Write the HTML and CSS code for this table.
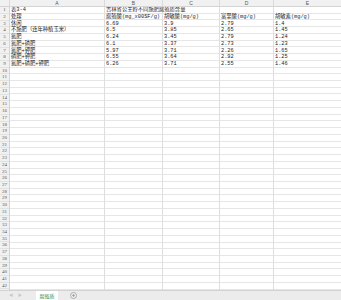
FILE: index.html
```html
<!DOCTYPE html>
<html lang="zh">
<head>
<meta charset="utf-8">
<link rel="stylesheet" href="styles.css">
</head>
<body>
<div class="sheet">
  <div class="colhead">
    <div class="corner"></div>
    <div class="ch">A</div>
    <div class="ch">B</div>
    <div class="ch">C</div>
    <div class="ch">D</div>
    <div class="ch last">E</div>
  </div>
  <div class="body">
    <div class="rownums">
      <div>1</div><div>2</div><div>3</div><div>4</div><div>5</div><div>6</div><div>7</div>
      <div>8</div><div>9</div><div>10</div><div>11</div><div>12</div><div>13</div><div>14</div>
      <div>15</div><div>16</div><div>17</div><div>18</div><div>19</div><div>20</div><div>21</div>
      <div>22</div><div>23</div><div>24</div><div>25</div><div>26</div><div>27</div><div>28</div>
      <div>29</div><div>30</div><div>31</div><div>32</div><div>33</div><div>34</div><div>35</div>
      <div>36</div><div>37</div><div>38</div><div>39</div><div>40</div><div>41</div><div>42</div>
    </div>
    <div class="cells">
      <div>表3-4</div><div class="wide">吉林省公主岭不同施肥腐殖质含量</div><div></div><div></div><div></div>
      <div>处理</div><div>腐殖酸(mg_x00SF/g)</div><div>胡敏酸(mg/g)</div><div>富里酸(mg/g)</div><div>胡敏素(mg/g)</div>
      <div>休闲</div><div>6.69</div><div>3.9</div><div>2.79</div><div>1.4</div>
      <div>不施肥（连年种植玉米）</div><div>6.5</div><div>3.85</div><div>2.65</div><div>1.45</div>
      <div>氮肥</div><div>6.24</div><div>3.45</div><div>2.79</div><div>1.24</div>
      <div>氮肥+磷肥</div><div>6.1</div><div>3.37</div><div>2.73</div><div>1.23</div>
      <div>氮肥+钾肥</div><div>5.97</div><div>3.71</div><div>2.26</div><div>1.65</div>
      <div>磷肥+钾肥</div><div>6.55</div><div>3.64</div><div>2.92</div><div>1.25</div>
      <div>氮肥+磷肥+钾肥</div><div>6.26</div><div>3.71</div><div>2.55</div><div>1.46</div>
    </div>
  </div>
  <div class="tabbar">
    <div class="nav"><span>◀</span><span>▶</span></div>
    <div class="tab">腐殖质</div>
    <div class="add">
      <svg width="7" height="7" viewBox="0 0 7 7"><circle cx="3.5" cy="3.5" r="3" fill="none" stroke="#9a9a9a" stroke-width="0.7"/><path d="M3.5 2v3M2 3.5h3" stroke="#9a9a9a" stroke-width="0.7"/></svg>
    </div>
  </div>
</div>
</body>
</html>
```
FILE: styles.css
```css
html, body {
  margin: 0;
  padding: 0;
  background: #fff;
  overflow: hidden;
}
.sheet {
  width: 341px;
  height: 300px;
  display: flex;
  flex-direction: column;
  font-family: "Liberation Mono", "Noto Sans CJK SC", monospace;
  color: #222;
}
.colhead {
  display: grid;
  grid-template-columns: 10px 95px 58px 57px 54px 1fr;
  height: 7.3px;
  background: #f1f1f1;
  border-bottom: 1px solid #d4d4d4;
  box-sizing: border-box;
  flex: none;
}
.ch, .corner {
  border-right: 1px solid #dadada;
  font-size: 5px;
  line-height: 6.3px;
  text-align: center;
  color: #555;
  font-family: "Liberation Sans", sans-serif;
}
.ch.last { border-right: none; }
.body {
  display: flex;
  flex: none;
  height: 282.66px;
  overflow: hidden;
}
.rownums {
  width: 10px;
  flex: none;
  background: #f1f1f1;
  border-right: 1px solid #d4d4d4;
  box-sizing: border-box;
}
.rownums div {
  height: 6.73px;
  line-height: 6.73px;
  font-size: 5px;
  text-align: center;
  color: #555;
  font-family: "Liberation Serif", serif;
  box-shadow: inset 0 -1px 0 #e2e2e2;
}
.cells {
  flex: 1;
  display: grid;
  grid-template-columns: 95px 58px 57px 54px 1fr;
  grid-auto-rows: 6.73px;
  align-content: start;
  font-size: 5.3px;
  line-height: 6.73px;
  background-image:
    linear-gradient(to right,
      transparent 94px, #dedede 94px, #dedede 95px,
      transparent 95px, transparent 152px, #dedede 152px, #dedede 153px,
      transparent 153px, transparent 209px, #dedede 209px, #dedede 210px,
      transparent 210px, transparent 263px, #dedede 263px, #dedede 264px,
      transparent 264px),
    repeating-linear-gradient(to bottom,
      transparent 0, transparent 5.73px, #e6e6e6 5.73px, #e6e6e6 6.73px);
}
.cells div {
  padding-left: 1px;
  white-space: nowrap;
  overflow: visible;
}
.tabbar {
  flex: 1;
  display: flex;
  align-items: stretch;
  background: #ececec;
  border-top: 1px solid #d2d2d2;
  box-sizing: border-box;
}
.nav {
  width: 36px;
  display: flex;
  gap: 5px;
  padding-left: 9px;
  box-sizing: border-box;
  align-items: center;
  font-size: 4px;
  color: #c8c8c8;
}
.tab {
  width: 22px;
  background: #fff;
  color: #2f8f4f;
  font-size: 5px;
  text-align: center;
  line-height: 9px;
  font-family: "Noto Sans CJK SC", sans-serif;
}
.add {
  display: flex;
  align-items: center;
  padding-left: 12px;
}
.add svg { display: block; }
```
